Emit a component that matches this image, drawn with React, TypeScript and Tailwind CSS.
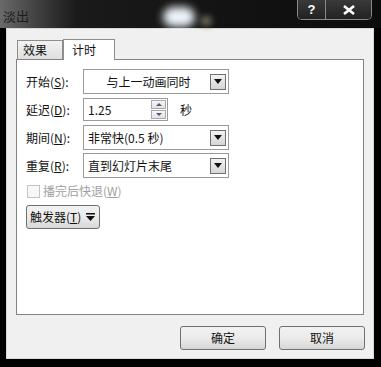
import React from "react";

const F = { fontFamily: '"Noto Sans CJK SC", "Noto Sans", sans-serif' };

function Arrow() {
  return (
    <div className="w-[16px] h-[16px] border border-[#707070] bg-gradient-to-b from-[#f2f2f2] to-[#d6d6d6] flex items-center justify-center">
      <svg width="8" height="5" viewBox="0 0 8 5">
        <path d="M0 0 L8 0 L4 5 Z" fill="#111" />
      </svg>
    </div>
  );
}

function Combo({ text, center }: { text: string; center?: boolean }) {
  return (
    <div className="w-[146px] h-[25px] border border-[#9a9a9a] bg-white flex items-center pl-[3px] pr-[2px]">
      <div className={`flex-1 text-[12px] text-[#111] ${center ? "text-center" : "pl-[1px]"}`}>{text}</div>
      <Arrow />
    </div>
  );
}

function Label({ t, k }: { t: string; k: string }) {
  return (
    <div className="w-[57px] text-[12px] text-[#111]">
      {t}(<span className="underline">{k}</span>):
    </div>
  );
}

export default function App() {
  return (
    <div style={F} className="w-[381px] h-[367px] bg-black flex flex-col overflow-hidden relative">
      {/* title bar */}
      <div className="h-[28px] relative bg-gradient-to-r from-[#6a6a6a] via-[#1a1a1a] via-20% to-[#0c0c0c] flex items-start">
        <div className="absolute left-[163px] top-[7px] w-[32px] h-[20px] rounded-full bg-[#eef4fa] blur-[4px]" />
        <div className="absolute left-[200px] top-[16px] w-[12px] h-[10px] rounded-full bg-[#6a6a5a] blur-[3px]" />
        <div className="pl-[3px] pt-[6px] text-[13px] text-[#1b1b1b] relative">淡出</div>
        <div className="ml-auto mr-[9px] flex h-[20px] border border-[#8a8a8a] border-t-0 rounded-b-[5px] overflow-hidden relative">
          <div className="w-[28px] bg-gradient-to-b from-[#3a3a3a] to-[#222] border-r border-[#8a8a8a] flex items-center justify-center text-white text-[13px] font-bold" style={{ fontFamily: '"Liberation Sans", sans-serif' }}>?</div>
          <div className="w-[45px] bg-gradient-to-b from-[#3a3a3a] to-[#222] flex items-center justify-center">
            <svg width="12" height="10" viewBox="0 0 12 10">
              <path d="M1 1 L11 9 M11 1 L1 9" stroke="#fff" strokeWidth="2.6" />
            </svg>
          </div>
        </div>
      </div>
      {/* frame body */}
      <div className="flex-1 ml-[6px] mr-[7px] mb-[8px] border border-[#d8d8d8] bg-[#f0f0f0] flex flex-col">
        <div className="pl-[9px] pt-[9px]">
          <div className="flex items-end pl-[1px] h-[21px]">
            <div className="w-[46px] h-[19px] border border-[#8d8d8d] border-b-0 bg-gradient-to-b from-[#f2f2f2] to-[#e0e0e0] text-[12px] text-[#111] pl-[5px] leading-[18px]">效果</div>
            <div className="w-[52px] h-[21px] border border-[#8d8d8d] border-b-0 bg-white text-[12px] text-[#111] pl-[8px] leading-[20px] -mb-[1px] relative z-10">计时</div>
          </div>
          <div className="w-[348px] h-[256px] border border-[#828282] bg-white pl-[9px] pt-[9px] flex flex-col">
            <div className="flex items-center h-[25px]">
              <Label t="开始" k="S" />
              <Combo text="与上一动画同时" center />
            </div>
            <div className="flex items-center h-[23px] mt-[4px]">
              <Label t="延迟" k="D" />
              <div className="w-[85px] h-[23px] border border-[#9a9a9a] bg-white flex items-center pl-[4px] pr-[1px]">
                <div className="flex-1 text-[12px] text-[#111]">1.25</div>
                <div className="flex flex-col gap-[1px]">
                  <div className="w-[15px] h-[9px] border border-[#a8a8a8] bg-gradient-to-b from-[#f6f6f6] to-[#e2e2e2] flex items-center justify-center">
                    <svg width="6" height="3" viewBox="0 0 6 3"><path d="M0 3 L6 3 L3 0 Z" fill="#4a5a7a" /></svg>
                  </div>
                  <div className="w-[15px] h-[9px] border border-[#a8a8a8] bg-gradient-to-b from-[#f6f6f6] to-[#e2e2e2] flex items-center justify-center">
                    <svg width="6" height="3" viewBox="0 0 6 3"><path d="M0 0 L6 0 L3 3 Z" fill="#4a5a7a" /></svg>
                  </div>
                </div>
              </div>
              <div className="ml-[12px] text-[12px] text-[#111]">秒</div>
            </div>
            <div className="flex items-center h-[25px] mt-[4px]">
              <Label t="期间" k="N" />
              <Combo text="非常快(0.5 秒)" />
            </div>
            <div className="flex items-center h-[25px] mt-[3px]">
              <Label t="重复" k="R" />
              <Combo text="直到幻灯片末尾" />
            </div>
            <div className="flex items-center mt-[6px] h-[14px]">
              <div className="w-[13px] h-[13px] border border-[#c4c4c4] bg-[#f7f7f7] ml-[1px]" />
              <div className="ml-[3px] text-[12px] text-[#a0a0a0]">
                播完后快退(<span className="underline">W</span>)
              </div>
            </div>
            <div className="mt-[7px] w-[74px] h-[24px] border border-[#707070] rounded-[3px] bg-gradient-to-b from-[#f2f2f2] via-[#ebebeb] to-[#d8d8d8] flex items-center pl-[3px]">
              <span className="text-[12px] text-[#111]">触发器(<span className="underline">T</span>)</span>
              <svg width="9" height="8" viewBox="0 0 9 8" className="ml-[5px]">
                <path d="M0 0 H9 V1.5 H0 Z M0 3 L9 3 L4.5 8 Z" fill="#111" />
              </svg>
            </div>
          </div>
        </div>
        <div className="flex justify-end gap-[13px] mt-[11px] mr-[8px]">
          <div className="w-[86px] h-[24px] border border-[#707070] rounded-[3px] bg-gradient-to-b from-[#f2f2f2] via-[#ebebeb] to-[#d6d6d6] flex items-center justify-center text-[12px] text-[#111]">确定</div>
          <div className="w-[86px] h-[24px] border border-[#707070] rounded-[3px] bg-gradient-to-b from-[#f2f2f2] via-[#ebebeb] to-[#d6d6d6] flex items-center justify-center text-[12px] text-[#111]">取消</div>
        </div>
      </div>
    </div>
  );
}
